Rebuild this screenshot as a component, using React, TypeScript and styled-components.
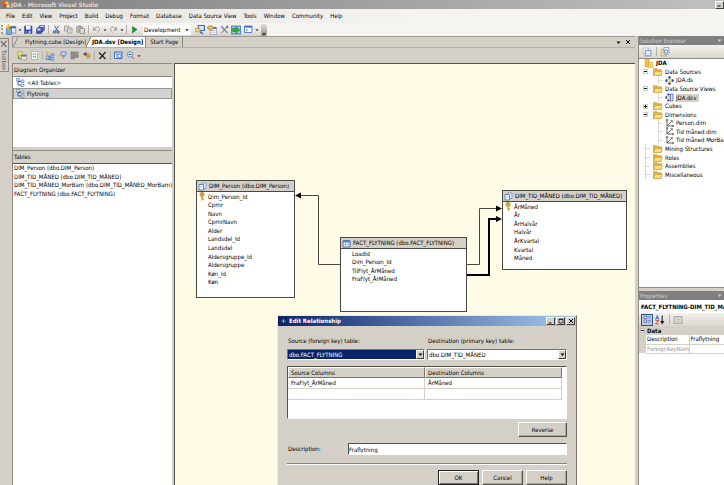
import React from "react";
import styled, { createGlobalStyle, css } from "styled-components";

const face = "#d4d0c8";
const uiFont = '"DejaVu Sans Condensed", "DejaVu Sans", sans-serif';

const GlobalStyle = createGlobalStyle`
  * { box-sizing: border-box; }
  html, body { margin: 0; height: 100%; overflow: hidden; }
  body, button, input, select, table { font-family: ${uiFont}; font-size: 6px; line-height: 8px; color: #000; }
  button, input, select { margin: 0; padding: 0; border: 0; border-radius: 0; background: none; }
  ul { list-style: none; margin: 0; padding: 0; }
`;

const Window = styled.div`
  height: 100vh;
  display: flex;
  flex-direction: column;
  background: ${face};
  white-space: nowrap;
  position: relative;
  overflow: hidden;
`;

const TitleBar = styled.header`
  height: 9px;
  flex: none;
  display: flex;
  align-items: center;
  gap: 1px;
  padding: 0 0 0 1px;
  background: linear-gradient(90deg, #808080, #c0c0c0);
  color: #dedad3;
  font-weight: bold;
`;

const Spacer = styled.div`
  flex: 1;
`;

const CaptionButton = styled.button`
  width: 9px;
  height: 8px;
  flex: none;
  display: grid;
  place-items: center;
  background: ${face};
  border: 1px solid;
  border-color: #fff #404040 #404040 #fff;
`;

const MenuBar = styled.nav`
  height: 14px;
  flex: none;
  display: flex;
  align-items: center;
  gap: 7px;
  padding-left: 6px;
  background: linear-gradient(90deg, #e6e3dd, #f5f4f1 60%);
`;

const MenuItem = styled.button``;

const ToolRow = styled.div`
  height: 13px;
  flex: none;
  display: flex;
  background: #f5f4f1;
`;

const Toolbar = styled.div`
  display: flex;
  align-items: center;
  padding-left: 1px;
  border-radius: 2px;
  background: linear-gradient(#f8f7f5, #e9e6e0 60%, #d6d2ca);
`;

const Grip = styled.div`
  width: 4px;
  height: 9px;
  border-left: 2px dotted #a5a198;
`;

const ToolButton = styled.button<{ $pressed?: boolean }>`
  width: 12px;
  height: 12px;
  flex: none;
  display: grid;
  place-items: center;
  ${(p) => p.$pressed && css`
    background: #c3cbdc;
    border: 1px solid #31517f;
  `}
`;

const DropArrow = styled.button`
  width: 5px;
  height: 10px;
  flex: none;
  display: grid;
  place-items: center;
`;

const Separator = styled.div`
  width: 4px;
  height: 9px;
  flex: none;
  display: flex;
  justify-content: center;
  &::before { content: ""; width: 1px; background: #b5b1a9; }
`;

const Overflow = styled.button`
  width: 6px;
  height: 12px;
  margin-left: 2px;
  display: flex;
  align-items: flex-end;
  justify-content: center;
  background: linear-gradient(#e4e1db, #8d8a83);
  border-radius: 0 2px 2px 0;
`;

const SelectFrame = styled.div<{ $sunken?: boolean; $width?: number }>`
  position: relative;
  display: flex;
  align-items: center;
  background: #fff;
  height: 10px;
  ${(p) => p.$width && css`width: ${p.$width}px; margin: 0 3px;`}
  ${(p) => p.$sunken && css`
    height: 11px;
    border: 1px solid;
    border-color: #77746d #fff #fff #77746d;
  `}
`;

const Select = styled.select<{ $focused?: boolean }>`
  appearance: none;
  width: 100%;
  height: 9px;
  padding-left: 1px;
  outline: none;
  ${(p) => p.$focused && css`
    background: #0a246a;
    color: #fff;
  `}
`;

const SelectArrow = styled.span<{ $raised?: boolean }>`
  position: absolute;
  right: 0;
  top: 0;
  bottom: 0;
  width: 8px;
  display: grid;
  place-items: center;
  pointer-events: none;
  ${(p) => p.$raised && css`
    background: ${face};
    border: 1px solid;
    border-color: #fff #404040 #404040 #fff;
  `}
`;

const Workspace = styled.div`
  flex: 1;
  min-height: 0;
  display: grid;
  grid-template-columns: 12px minmax(0, 1fr) 86px;
`;

const ToolboxStrip = styled.aside`
  padding-top: 2px;
`;

const ToolboxTab = styled.button`
  display: flex;
  align-items: center;
  gap: 2px;
  writing-mode: vertical-rl;
  width: 9px;
  height: 34px;
  padding-top: 1px;
  border: 1px solid #8d8a83;
  border-left: 0;
  color: #55524c;
`;

const DocumentArea = styled.main`
  display: flex;
  flex-direction: column;
  min-width: 0;
  min-height: 0;
  margin-right: 3px;
`;

const TabStrip = styled.div`
  height: 11px;
  flex: none;
  display: flex;
  align-items: flex-end;
  padding-right: 3px;
  border-top: 1px solid #9d9a93;
  border-left: 1px solid #9d9a93;
`;

const Tab = styled.button<{ $active?: boolean }>`
  height: 10px;
  padding: 0 2px 0 6px;
  border-right: 1px solid #8d8a83;
  background: linear-gradient(116deg, transparent 4px, #8d8a83 4px, #8d8a83 5px, ${(p) => (p.$active ? "#fff" : face)} 5px);
  font-weight: ${(p) => (p.$active ? "bold" : "normal")};
  &:first-child { padding-left: 12px; padding-right: 0; border-right: 0; }
  &:nth-child(3) { padding-left: 4px; padding-right: 4px; background: none; }
`;

const StripButton = styled.button`
  width: 9px;
  height: 10px;
  display: grid;
  place-items: center;
`;

const DesignerBar = styled.div`
  height: 16px;
  flex: none;
  display: flex;
  align-items: center;
  padding-left: 4px;
  border-top: 1px solid #b5b1a9;
`;

const Designer = styled.div`
  flex: 1;
  min-height: 0;
  display: grid;
  grid-template-columns: 160px minmax(0, 1fr);
  gap: 2px;
`;

const Organizer = styled.section`
  display: flex;
  flex-direction: column;
  border-left: 1px solid #8d8a83;
`;

const PaneTitle = styled.h2`
  height: 13px;
  flex: none;
  display: flex;
  align-items: center;
  margin: 0;
  padding-left: 1px;
  border-top: 1px solid #8d8a83;
  font: inherit;
`;

const DiagramList = styled.ul`
  height: 71px;
  flex: none;
  background: #fff;
  border-top: 1px solid #8d8a83;
  margin-bottom: 3px;
`;

const DiagramItem = styled.li<{ $selected?: boolean }>`
  height: 11px;
  display: flex;
  align-items: center;
  gap: 2px;
  padding-left: 2px;
  border: 1px solid ${(p) => (p.$selected ? "#99968f" : "transparent")};
  background: ${(p) => (p.$selected ? "#d2d2d2" : "none")};
`;

const TableList = styled.div`
  flex: 1;
  background: #fff;
  border-top: 1px solid #55524c;
  padding: 0 1px;
`;

const Rows = styled.ul<{ $height: number }>`
  height: ${(p) => p.$height}px;
  display: grid;
  grid-auto-rows: minmax(0, 1fr);
  align-items: center;
`;

const Canvas = styled.section`
  position: relative;
  overflow: hidden;
  background: #fffbe6;
  border-top: 1px solid #55524c;
  border-left: 1px solid #55524c;
`;

const Links = styled.svg`
  position: absolute;
  inset: 0;
  width: 100%;
  height: 100%;
`;

const Entity = styled.article<{ $x: number; $y: number; $w: number; $h: number }>`
  position: absolute;
  left: ${(p) => p.$x}px;
  top: ${(p) => p.$y}px;
  width: ${(p) => p.$w}px;
  height: ${(p) => p.$h}px;
  background: #fff;
  border: 1px solid #4a4843;
`;

const EntityTitle = styled.h3`
  height: 11px;
  display: flex;
  align-items: center;
  gap: 2px;
  margin: 0;
  padding-left: 1px;
  font: inherit;
  background: ${face};
  border-bottom: 1px solid #4a4843;
`;

const Field = styled.li`
  display: grid;
  grid-template-columns: 11px 1fr;
  align-items: center;
  height: 8px;
`;

const KeySlot = styled.span`
  display: flex;
  height: 9px;
  padding-left: 1px;
`;

const SidePanels = styled.aside`
  display: flex;
  flex-direction: column;
  min-height: 0;
  overflow: hidden;
  border-left: 1px solid #8d8a83;
`;

const PanelTitle = styled.h2`
  height: 9px;
  flex: none;
  display: flex;
  align-items: center;
  justify-content: space-between;
  margin: 0;
  padding: 0 2px 0 1px;
  font: inherit;
  color: ${face};
  background: #808080;
`;

const PanelBar = styled.div`
  height: 13px;
  flex: none;
  display: flex;
  align-items: center;
  gap: 1px;
  padding-left: 2px;
  background: linear-gradient(#f3f1ee, #dad6cf);
`;

const TreePane = styled.div`
  height: 230px;
  flex: none;
  background: #fff;
  border-top: 1px solid #8d8a83;
  border-bottom: 1px solid #8d8a83;
  margin-bottom: 3px;
  overflow: hidden;
`;

const TreeRow = styled.li<{ $depth: number }>`
  height: 8px;
  display: flex;
  align-items: center;
  gap: 2px;
  padding-left: ${(p) => [5, 4, 17][p.$depth]}px;
`;

const Twig = styled.span<{ $wide?: boolean }>`
  width: ${(p) => (p.$wide ? 8 : 7)}px;
  height: 9px;
  display: flex;
  align-items: center;
`;

const TreeLabel = styled.span<{ $bold?: boolean; $selected?: boolean }>`
  font-weight: ${(p) => (p.$bold ? "bold" : "normal")};
  background: ${(p) => (p.$selected ? face : "none")};
  padding-right: ${(p) => (p.$selected ? 3 : 0)}px;
`;

const ObjectName = styled.div`
  height: 13px;
  flex: none;
  display: flex;
  align-items: center;
  padding-left: 2px;
  background: #fff;
  font-weight: bold;
  overflow: hidden;
`;

const PropertyTable = styled.table`
  border-collapse: collapse;
  table-layout: fixed;
  width: 100%;
  th, td { height: 9px; padding: 0 1px; text-align: left; font-weight: normal; overflow: hidden; border-bottom: 1px solid ${face}; }
  td { border-left: 1px solid ${face}; }
  col:first-child { width: 7px; }
  col:nth-child(2) { width: 43px; }
`;

const GroupRow = styled.tr`
  && > * { background: ${face}; font-weight: bold; border: 0; }
`;

const MutedRow = styled.tr`
  th { color: #99968f; }
`;

const GutterCell = styled.td`
  && { background: ${face}; border: 0; }
`;

const PropertyArea = styled.div`
  flex: 1;
  background: #fff;
`;

const Dialog = styled.div`
  position: absolute;
  left: 277px;
  top: 315px;
  width: 300px;
  height: 182px;
  background: ${face};
  border: 1px solid;
  border-color: #ece9e4 #77746d #77746d #ece9e4;
`;

const DialogTitle = styled.header`
  height: 10px;
  display: flex;
  align-items: center;
  padding: 0 1px 0 3px;
  gap: 3px;
  background: linear-gradient(90deg, #0a246a, #a6caf0);
  color: #fff;
  font-weight: bold;
`;

const CaptionGroup = styled.div`
  display: flex;
  gap: 1px;
`;

const DialogBody = styled.form`
  padding: 11px 9px 0;
  display: flex;
  flex-direction: column;
`;

const TwoColumns = styled.div`
  display: grid;
  grid-template-columns: 138px 1fr;
  gap: 2px;
`;

const Labelled = styled.div`
  display: grid;
  grid-template-rows: 9px 11px;
  gap: 3px;
  label { padding-left: 1px; }
`;

const GridFrame = styled.div`
  height: 53px;
  margin-top: 6px;
  background: #fff;
  border: 1px solid;
  border-color: #55524c #fff #fff #55524c;
  padding-right: 4px;
`;

const ColumnTable = styled.table`
  width: 100%;
  border-collapse: separate;
  border-spacing: 0;
  table-layout: fixed;
  th, td { height: 11px; padding: 0 3px; text-align: left; font-weight: normal; }
  th { background: ${face}; border: 1px solid; border-color: #fff #77746d #77746d #fff; padding: 0 2px; }
  td { border-right: 1px solid ${face}; border-bottom: 1px solid ${face}; }
`;

const ButtonRow = styled.div`
  display: flex;
  justify-content: flex-end;
  gap: 3px;
`;

const PushButton = styled.button<{ $primary?: boolean; $width: number }>`
  width: ${(p) => p.$width}px;
  height: 15px;
  background: ${face};
  border: 1px solid;
  border-color: #fff #55524c #55524c #fff;
  box-shadow: inset -1px -1px 0 #aaa69d;
  ${(p) => p.$primary && css`
    border-color: #222;
    box-shadow: inset 1px 1px 0 #fff, inset -1px -1px 0 #77746d;
  `}
`;

const DescriptionRow = styled.div`
  display: grid;
  grid-template-columns: 61px 1fr;
  align-items: center;
  margin: 6px 0 8px;
  label { padding-left: 1px; }
`;

const TextInput = styled.input`
  height: 12px;
  padding: 0;
  background: #fff;
  border: 1px solid;
  border-color: #55524c #fff #fff #55524c;
`;

const Rule = styled.hr`
  width: 100%;
  margin: 0 0 5px;
  border: 0;
  border-top: 1px solid #88857d;
  border-bottom: 1px solid #fff;
`;

const ButtonStack = styled.div`
  padding-top: 3px;
`;

type IconProps = { size?: number; children: React.ReactNode };
const Icon = ({ size = 9, children }: IconProps) => (
  <svg width={size} height={size} viewBox="0 0 18 18" fill="none" aria-hidden="true">{children}</svg>
);

const Triangle = ({ color = "#111", size = 5 }: { color?: string; size?: number }) => (
  <svg width={size} height={size} viewBox="0 0 10 10" aria-hidden="true"><path d="M1 3h8L5 8z" fill={color} /></svg>
);

const AppIcon = () => (
  <Icon><path d="M2 3h7v6H2z" fill="#f05a28" /><path d="M9 3h6v5H9z" fill="#f7c93c" /><path d="M5 9h6v6H5z" fill="#d33" /><path d="M11 9h6v6h-6z" fill="#ffe08a" /></Icon>
);
const NewIcon = () => (
  <Icon size={11}><path d="M4 4h12v11H4z" fill="#dce9fa" stroke="#3e6db5" /><path d="M4 4h12v3H4z" fill="#3e6db5" /><path d="M1 7h8v10H1z" fill="#7fa8de" stroke="#3464a8" /><path d="M4 0v8M0 4h8" stroke="#f0b93a" strokeWidth="2" /></Icon>
);
const SaveIcon = () => (
  <Icon><path d="M1 2h15v15H1z" fill="#3d55b5" stroke="#2a3d90" /><path d="M4 2h9v7H4z" fill="#f2f4fb" /><path d="M5 12h8v5H5z" fill="#c3cbe8" /><path d="M6 12h3v4H6z" fill="#26377f" /></Icon>
);
const SaveAllIcon = () => (
  <Icon><path d="M7 1h10v10H7z" fill="#6c80cf" stroke="#2a3d90" /><path d="M4 4h10v10H4z" fill="#5367c0" stroke="#2a3d90" /><path d="M1 7h10v10H1z" fill="#3d55b5" stroke="#2a3d90" /><path d="M3 7h6v4H3zM9 2h6v2H9z" fill="#e5e9f8" /></Icon>
);
const CutIcon = () => (
  <Icon><path d="M5 1l6 11M13 1L7 12" stroke="#4b6ea8" strokeWidth="2" /><circle cx="5" cy="14" r="2.5" stroke="#2c4f96" strokeWidth="2" /><circle cx="12" cy="14" r="2.5" stroke="#2c4f96" strokeWidth="2" /></Icon>
);
const CopyIcon = () => (
  <Icon><path d="M1 2h9v10H1z" fill="#dcdad5" stroke="#a5a29b" strokeWidth="2" /><path d="M7 6h9v10H7z" fill="#e9e7e3" stroke="#a5a29b" strokeWidth="2" /><path d="M9 9h5M9 12h5" stroke="#a5a29b" /></Icon>
);
const PasteIcon = () => (
  <Icon><path d="M1 3h12v12H1z" fill="#b4b1aa" stroke="#98958e" /><path d="M5 1h5v3H5z" fill="#8c8982" /><path d="M8 7h9v10H8z" fill="#e3e0da" stroke="#98958e" strokeWidth="2" /></Icon>
);
const UndoIcon = ({ redo }: { redo?: boolean }) => (
  <Icon><g transform={redo ? "matrix(-1 0 0 1 18 0)" : undefined}><path d="M4 8c4-6 11-5 11 0 0 3-2 5-4 7" stroke="#a29f98" strokeWidth="2" /><path d="M2 3v8h8z" fill="#a29f98" /></g></Icon>
);
const PlayIcon = () => (
  <Icon><path d="M5 3l9 6-9 7z" fill="#1f9a35" stroke="#0c6a1e" /></Icon>
);
const ExplorerIcon = () => (
  <Icon size={10}><path d="M6 1h11v9H6z" fill="#dce8f8" stroke="#3e6db5" strokeWidth="2" /><path d="M1 6h8v6H1z" fill="#f4cf62" stroke="#b38a27" /><path d="M9 12l5 4" stroke="#3e6db5" strokeWidth="3" /></Icon>
);
const PropertiesIcon = () => (
  <Icon size={10}><path d="M6 5h11v12H6z" fill="#fff" stroke="#6a7fae" /><path d="M6 4h11v3H6z" fill="#3e6db5" /><path d="M8 10h7M8 13h7" stroke="#888" /><path d="M1 3l6-2 5 3-4 6-6-2z" fill="#edbb55" stroke="#96712a" /></Icon>
);
const ToolsIcon = () => (
  <Icon><path d="M3 3l12 13" stroke="#7f8fae" strokeWidth="3" /><path d="M15 2L3 16" stroke="#c64b36" strokeWidth="2" /><path d="M1 3l4-2 3 4-3 3z" fill="#93a3c5" /><path d="M12 2l4-1 1 4-3 2z" fill="#667aa4" /></Icon>
);
const DeployIcon = () => (
  <Icon size={10}><path d="M1 2h16v14H1z" fill="#b9d0f2" stroke="#5f82c0" strokeWidth="2" /><path d="M3 6h6V3l7 6-7 6v-3H3z" fill="#23b336" stroke="#137a22" /></Icon>
);
const CommandIcon = () => (
  <Icon><path d="M1 2h15v13H1z" fill="#f3f7fd" stroke="#5f82c0" strokeWidth="2" /><path d="M1 2h15v3H1z" fill="#4068b0" /><path d="M4 8l3 2-3 2" stroke="#333" /></Icon>
);
const AddTableIcon = () => (
  <Icon size={10}><path d="M1 1h8v7H1z" fill="#f7d66c" stroke="#ba9127" /><path d="M8 7h9v9H8z" fill="#f7e9a8" stroke="#7d87a0" /><path d="M8 7h9v3H8z" fill="#5273ac" /><path d="M3 9v5h4" stroke="#4a9445" strokeWidth="2" /></Icon>
);
const RefreshIcon = () => (
  <Icon><path d="M3 1h12v16H3z" fill="#fff" stroke="#7c8895" /><path d="M6 8c1-4 6-3 6 0M12 10c-1 4-6 3-6 0" stroke="#38974a" strokeWidth="2" /></Icon>
);
const DiagramIcon = () => (
  <Icon><path d="M4 3v11h7M4 7h7" stroke="#3c62ae" strokeWidth="2" /><path d="M1 1h6v5H1zM10 4h6v5h-6zM10 12h6v5h-6z" fill="#d5e3f8" stroke="#3c62ae" /></Icon>
);
const NewDiagramIcon = () => (
  <Icon size={10}><path d="M5 7v8h7M7 9l6 4" stroke="#4776c4" strokeWidth="2" /><path d="M2 9h5v6H2zM11 12h5v5h-5zM11 5h5v4h-5z" fill="#a9c8f1" stroke="#3f6bb5" /><path d="M4 0v8M0 4h8" stroke="#edb12d" strokeWidth="2" /></Icon>
);
const RelationIcon = () => (
  <Icon><path d="M6 2h10v6H6z" fill="#d9e7fa" stroke="#5b84c4" strokeWidth="2" /><path d="M1 7h6v4H1z" fill="#f0b93a" /><path d="M7 10l6 1-4 5" stroke="#6a92ce" strokeWidth="2" /></Icon>
);
const GrayBlockIcon = () => (
  <Icon><path d="M1 1h16v13H9v3H1z" fill="#8f8c85" /></Icon>
);
const FindIcon = () => (
  <Icon><path d="M2 6l5-4 4 4-5 4z" fill="#555b68" /><path d="M8 9l5-4 4 5-5 5z" fill="#e2a928" stroke="#936c17" /></Icon>
);
const DeleteIcon = () => (
  <Icon><path d="M2 3l13 13M15 2L3 16" stroke="#222" strokeWidth="2.4" /></Icon>
);
const ExploreIcon = () => (
  <Icon><path d="M1 2h15v13H1z" fill="#e1ebfa" stroke="#4170bd" strokeWidth="2" /><path d="M1 6h15M6 2v13" stroke="#4170bd" /><circle cx="11" cy="10" r="3.5" fill="#fff" stroke="#315ba3" strokeWidth="1.5" /></Icon>
);
const ZoomIcon = () => (
  <Icon><circle cx="8" cy="7" r="5.5" fill="#dbe9fb" stroke="#6d8dc0" strokeWidth="2" /><path d="M5 7h6" stroke="#315ba3" strokeWidth="2" /><path d="M12 12l4 4" stroke="#b98f4a" strokeWidth="3" /></Icon>
);
const ToolboxIcon = () => (
  <Icon size={8}><path d="M2 3l13 13" stroke="#54709f" strokeWidth="3" /><path d="M15 2L3 15" stroke="#c4463c" strokeWidth="2.4" /></Icon>
);
const TableIcon = () => (
  <Icon><path d="M2 3h14v13H2z" fill="#f1f6fd" stroke="#4b72b8" strokeWidth="2" /><path d="M2 3h14v4H2z" fill="#5a86d3" /><path d="M2 11h14M7 6v10M12 6v10" stroke="#7b9bd2" /></Icon>
);
const LinkedTableIcon = () => (
  <Icon><path d="M7 2h9v11H7z" fill="#e1edfc" stroke="#7fa3da" strokeWidth="2" /><path d="M2 5h9v11H2z" fill="#f5f9ff" stroke="#5d87c9" strokeWidth="2" /><path d="M2 9h9M6 9v7" stroke="#a9c0e6" /></Icon>
);
const KeyIcon = () => (
  <Icon><circle cx="8" cy="5" r="4.5" fill="#eab33a" stroke="#a8771c" /><path d="M7 9h3v8H7zM10 12h2v3h-2z" fill="#d99d28" /><circle cx="8" cy="4" r="1.3" fill="#7d5a14" /></Icon>
);
const FolderIcon = () => (
  <Icon size={10}><path d="M1 3h6l2 2h6v10H1z" fill="#e9b23a" stroke="#b98a2c" /><path d="M1 15l3-7h13l-3 7z" fill="#fde08a" stroke="#c9972f" /></Icon>
);
const ProjectIcon = () => (
  <Icon size={10}><path d="M2 2h7v14H2z" fill="#f4c536" stroke="#c4931c" /><path d="M8 8h8v9H8z" fill="#fbdf7c" stroke="#c4931c" /><path d="M12 11v4" stroke="#b88a1e" /></Icon>
);
const SourceIcon = () => (
  <Icon><path d="M9 4l5 5-5 5-5-5z" fill="#ffe27a" stroke="#a6892c" /><path d="M9 0l3 4H6zM9 18l3-4H6zM0 9l4-3v6zM18 9l-4-3v6z" fill="#2e42c0" stroke="#2e42c0" /></Icon>
);
const ViewIcon = () => (
  <Icon><path d="M7 5l4 4-4 4-4-4z" fill="#ffe27a" stroke="#a6892c" /><path d="M7 1l3 3H4zM7 17l3-3H4zM0 9l3-3v6z" fill="#2e42c0" stroke="#2e42c0" /><path d="M11 2h5v14h-5z" fill="#dae4f8" stroke="#4458b8" strokeWidth="1.5" /></Icon>
);
const DimensionIcon = () => (
  <Icon><path d="M4 1v13h13M4 14L14 4" stroke="#333" strokeWidth="1.5" /><path d="M2 4l2-4 2 4M14 12l4 2-4 2M11 3h4v4" stroke="#333" /></Icon>
);
const StackIcon = () => (
  <Icon size={10}><path d="M2 2h10v10H2z" fill="#fff" stroke="#8e9bb0" /><path d="M6 6h10v10H6z" fill="#dfe8f5" stroke="#8fa3c6" strokeWidth="2" /></Icon>
);
const PagesIcon = () => (
  <Icon size={10}><path d="M2 4h9v12H2z" fill="#fbe39a" stroke="#b08a32" /><path d="M7 1h9v12H7z" fill="#f6f9ff" stroke="#5271a8" /><circle cx="11" cy="8" r="3" stroke="#426bbb" strokeWidth="1.5" /></Icon>
);
const CategoryIcon = () => (
  <Icon><path d="M2 2h5v5H2zM2 10h5v5H2z" fill="#eef3fb" stroke="#4667a6" strokeWidth="1.5" /><path d="M9 3h7M9 6h7M9 11h7M9 14h7" stroke="#4667a6" /></Icon>
);
const SortIcon = () => (
  <Icon size={10}><path d="M1 8l3-7 3 7M2 6h4" stroke="#2c51b0" strokeWidth="1.5" /><path d="M1 10h6l-6 6h6" stroke="#b23c2c" strokeWidth="1.5" /><path d="M13 1v12" stroke="#222" strokeWidth="2" /><path d="M9 11h8l-4 6z" fill="#222" /></Icon>
);
const PageIcon = () => (
  <Icon size={10}><path d="M2 3h14v12H2z" fill="#e1ded8" stroke="#b0ada6" strokeWidth="2" /><path d="M5 8h8M5 11h8" stroke="#b0ada6" /></Icon>
);
const ExpandIcon = ({ plus }: { plus?: boolean }) => (
  <svg width="5" height="5" viewBox="0 0 10 10" aria-hidden="true"><path d="M1 1h8v8H1z" fill="#fff" stroke="#99968f" /><path d={plus ? "M2 5h6M5 2v6" : "M2 5h6"} stroke="#111" strokeWidth="2" /></svg>
);
const BranchIcon = () => (
  <svg width="7" height="9" viewBox="0 0 14 18" aria-hidden="true"><path d="M5 0v18M5 9h9" stroke="#bab7af" fill="none" /></svg>
);
const CloseGlyph = ({ color = "#111" }: { color?: string }) => (
  <svg width="6" height="6" viewBox="0 0 12 12" aria-hidden="true"><path d="M2 2l8 8M10 2l-8 8" stroke={color} strokeWidth="2" /></svg>
);
const MinGlyph = () => (
  <svg width="5" height="5" viewBox="0 0 10 10" aria-hidden="true"><path d="M1 8h6" stroke="#111" strokeWidth="2" /></svg>
);
const MaxGlyph = () => (
  <svg width="6" height="6" viewBox="0 0 12 12" aria-hidden="true"><path d="M2 2h8v8H2zM2 3h8" stroke="#111" strokeWidth="1.5" fill="none" /></svg>
);
const FormGlyph = () => (
  <svg width="5" height="6" viewBox="0 0 10 12" aria-hidden="true"><path d="M1 6h8M5 2v8" stroke="#8fa878" strokeWidth="2" /></svg>
);

const menus = ["File", "Edit", "View", "Project", "Build", "Debug", "Format", "Database", "Data Source View", "Tools", "Window", "Community", "Help"];
const tables = ["DIM_Person (dbo.DIM_Person)", "DIM_TID_MÅNED (dbo.DIM_TID_MÅNED)", "DIM_TID_MÅNED_MorBarn (dbo.DIM_TID_MÅNED_MorBarn)", "FACT_FLYTNING (dbo.FACT_FLYTNING)"];

const entities = [
  { title: tables[0], icon: <LinkedTableIcon />, x: 21, y: 116, w: 99, h: 118, listHeight: 94, keyed: true, fields: ["Dim_Person_Id", "Cprnr", "Navn", "CprnrNavn", "Alder", "Landsdel_Id", "Landsdel", "Aldersgruppe_Id", "Aldersgruppe", "Køn_Id", "Køn"] },
  { title: tables[3], icon: <TableIcon />, x: 165, y: 173, w: 127, h: 75, listHeight: 34, keyed: false, fields: ["LoadId", "Dim_Person_Id", "TilFlyt_ÅrMåned", "FraFlyt_ÅrMåned"] },
  { title: tables[1], icon: <LinkedTableIcon />, x: 327, y: 126, w: 125, h: 80, listHeight: 60, keyed: true, fields: ["ÅrMåned", "År", "ÅrHalvår", "Halvår", "ÅrKvartal", "Kvartal", "Måned"] },
];

type Node = { label: string; depth: number; icon: React.ReactNode; toggle?: "plus" | "minus"; bold?: boolean; selected?: boolean };
const tree: Node[] = [
  { label: "JDA", depth: 0, icon: <ProjectIcon />, bold: true },
  { label: "Data Sources", depth: 1, icon: <FolderIcon />, toggle: "minus" },
  { label: "JDA.ds", depth: 2, icon: <SourceIcon /> },
  { label: "Data Source Views", depth: 1, icon: <FolderIcon />, toggle: "minus" },
  { label: "JDA.dsv", depth: 2, icon: <ViewIcon />, selected: true },
  { label: "Cubes", depth: 1, icon: <FolderIcon />, toggle: "plus" },
  { label: "Dimensions", depth: 1, icon: <FolderIcon />, toggle: "minus" },
  { label: "Person.dim", depth: 2, icon: <DimensionIcon /> },
  { label: "Tid måned.dim", depth: 2, icon: <DimensionIcon /> },
  { label: "Tid måned MorBarn.dim", depth: 2, icon: <DimensionIcon /> },
  { label: "Mining Structures", depth: 1, icon: <FolderIcon /> },
  { label: "Roles", depth: 1, icon: <FolderIcon /> },
  { label: "Assemblies", depth: 1, icon: <FolderIcon /> },
  { label: "Miscellaneous", depth: 1, icon: <FolderIcon /> },
];

const Tool = ({ label, pressed, children }: { label: string; pressed?: boolean; children: React.ReactNode }) => (
  <ToolButton type="button" aria-label={label} $pressed={pressed}>{children}</ToolButton>
);
const Drop = ({ label }: { label: string }) => (
  <DropArrow type="button" aria-label={label}><Triangle size={4} color="#444" /></DropArrow>
);

function RelationshipDialog() {
  return (
    <Dialog role="dialog" aria-label="Edit Relationship">
      <DialogTitle>
        <FormGlyph />
        <span>Edit Relationship</span>
        <Spacer />
        <CaptionGroup>
          <CaptionButton aria-label="Minimize"><MinGlyph /></CaptionButton>
          <CaptionButton aria-label="Maximize"><MaxGlyph /></CaptionButton>
          <CaptionButton aria-label="Close"><CloseGlyph /></CaptionButton>
        </CaptionGroup>
      </DialogTitle>
      <DialogBody onSubmit={(e) => e.preventDefault()}>
        <TwoColumns>
          <Labelled>
            <label htmlFor="source">Source (foreign key) table:</label>
            <SelectFrame $sunken>
              <Select id="source" $focused><option>dbo.FACT_FLYTNING</option></Select>
              <SelectArrow $raised><Triangle /></SelectArrow>
            </SelectFrame>
          </Labelled>
          <Labelled>
            <label htmlFor="destination">Destination (primary key) table:</label>
            <SelectFrame $sunken>
              <Select id="destination"><option>dbo.DIM_TID_MÅNED</option></Select>
              <SelectArrow $raised><Triangle /></SelectArrow>
            </SelectFrame>
          </Labelled>
        </TwoColumns>
        <GridFrame>
          <ColumnTable>
            <thead><tr><th>Source Columns</th><th>Destination Columns</th></tr></thead>
            <tbody>
              <tr><td>FraFlyt_ÅrMåned</td><td>ÅrMåned</td></tr>
              <tr><td /><td /></tr>
            </tbody>
          </ColumnTable>
        </GridFrame>
        <ButtonStack>
          <ButtonRow><PushButton type="button" $width={49}>Reverse</PushButton></ButtonRow>
        </ButtonStack>
        <DescriptionRow>
          <label htmlFor="description">Description:</label>
          <TextInput id="description" defaultValue="Fraflytning" />
        </DescriptionRow>
        <Rule />
        <ButtonRow>
          <PushButton type="submit" $primary $width={41}>OK</PushButton>
          <PushButton type="button" $width={41}>Cancel</PushButton>
          <PushButton type="button" $width={41}>Help</PushButton>
        </ButtonRow>
      </DialogBody>
    </Dialog>
  );
}

function Diagram() {
  return (
    <Canvas aria-label="Diagram">
      <Links aria-hidden="true">
        <path d="M165 200.500H143.500V131.500H124M292 200.500H304.500V144.500H322" stroke="#4a4843" fill="none" />
        <path d="M292 211H314V155H322" stroke="#000" strokeWidth="2" fill="none" />
        <path d="M120 131.500l6-3v6zM327 144.500l-6-3v6zM327 155l-6-3v6z" fill="#000" />
      </Links>
      {entities.map((e) => (
        <Entity key={e.title} $x={e.x} $y={e.y} $w={e.w} $h={e.h}>
          <EntityTitle>{e.icon}{e.title}</EntityTitle>
          <Rows $height={e.listHeight}>
            {e.fields.map((f, i) => (
              <Field key={f}><KeySlot>{e.keyed && i === 0 && <KeyIcon />}</KeySlot>{f}</Field>
            ))}
          </Rows>
        </Entity>
      ))}
    </Canvas>
  );
}

export default function App() {
  return (
    <Window>
      <GlobalStyle />
      <TitleBar>
        <AppIcon />
        <span>JDA - Microsoft Visual Studio</span>
        <Spacer />
        <CaptionButton aria-label="Minimize window"><MinGlyph /></CaptionButton>
      </TitleBar>
      <MenuBar>{menus.map((m) => <MenuItem key={m} type="button">{m}</MenuItem>)}</MenuBar>
      <ToolRow>
        <Toolbar>
          <Grip />
          <Tool label="New project"><NewIcon /></Tool>
          <Drop label="New project options" />
          <Tool label="Save"><SaveIcon /></Tool>
          <Tool label="Save all"><SaveAllIcon /></Tool>
          <Separator />
          <Tool label="Cut"><CutIcon /></Tool>
          <Tool label="Copy"><CopyIcon /></Tool>
          <Tool label="Paste"><PasteIcon /></Tool>
          <Separator />
          <Tool label="Undo"><UndoIcon /></Tool>
          <Drop label="Undo list" />
          <Tool label="Redo"><UndoIcon redo /></Tool>
          <Drop label="Redo list" />
          <Separator />
          <Tool label="Start"><PlayIcon /></Tool>
          <SelectFrame $width={48}>
            <Select aria-label="Configuration"><option>Development</option></Select>
            <SelectArrow><Triangle size={4} /></SelectArrow>
          </SelectFrame>
          <Tool label="Solution Explorer"><ExplorerIcon /></Tool>
          <Tool label="Properties window"><PropertiesIcon /></Tool>
          <Tool label="Toolbox window"><ToolsIcon /></Tool>
          <Tool label="Deploy"><DeployIcon /></Tool>
          <Tool label="Command window"><CommandIcon /></Tool>
          <Drop label="Other windows" />
          <Overflow type="button" aria-label="Toolbar options"><Triangle size={4} /></Overflow>
        </Toolbar>
      </ToolRow>
      <Workspace>
        <ToolboxStrip>
          <ToolboxTab type="button"><ToolboxIcon />Toolbox</ToolboxTab>
        </ToolboxStrip>
        <DocumentArea>
          <TabStrip>
            <Tab type="button">Flytning.cube [Design]</Tab>
            <Tab type="button" $active>JDA.dsv [Design]</Tab>
            <Tab type="button">Start Page</Tab>
            <Spacer />
            <StripButton type="button" aria-label="Active files"><Triangle /></StripButton>
            <StripButton type="button" aria-label="Close document"><CloseGlyph /></StripButton>
          </TabStrip>
          <DesignerBar>
            <Tool label="Add objects"><AddTableIcon /></Tool>
            <Tool label="Refresh"><RefreshIcon /></Tool>
            <Separator />
            <Tool label="New diagram"><NewDiagramIcon /></Tool>
            <Tool label="New relationship"><RelationIcon /></Tool>
            <Tool label="Replace table"><GrayBlockIcon /></Tool>
            <Tool label="Find table"><FindIcon /></Tool>
            <Separator />
            <Tool label="Delete"><DeleteIcon /></Tool>
            <Separator />
            <Tool label="Explore data"><ExploreIcon /></Tool>
            <Tool label="Zoom"><ZoomIcon /></Tool>
            <Drop label="Zoom levels" />
          </DesignerBar>
          <Designer>
            <Organizer>
              <PaneTitle>Diagram Organizer</PaneTitle>
              <DiagramList>
                <DiagramItem><DiagramIcon />&lt;All Tables&gt;</DiagramItem>
                <DiagramItem $selected><DiagramIcon />Flytning</DiagramItem>
              </DiagramList>
              <PaneTitle>Tables</PaneTitle>
              <TableList>
                <Rows $height={34}>{tables.map((t) => <li key={t}>{t}</li>)}</Rows>
              </TableList>
            </Organizer>
            <Diagram />
          </Designer>
        </DocumentArea>
        <SidePanels>
          <PanelTitle>Solution Explorer<Triangle color={face} /></PanelTitle>
          <PanelBar>
            <Tool label="Properties"><StackIcon /></Tool>
            <Separator />
            <Tool label="Show all files"><PagesIcon /></Tool>
          </PanelBar>
          <TreePane>
            <Rows $height={120}>
              {tree.map((n) => (
                <TreeRow key={n.label} $depth={n.depth}>
                  {n.depth > 0 && (
                    <Twig $wide={n.depth === 1}>{n.toggle ? <ExpandIcon plus={n.toggle === "plus"} /> : <BranchIcon />}</Twig>
                  )}
                  {n.icon}
                  <TreeLabel $bold={n.bold} $selected={n.selected}>{n.label}</TreeLabel>
                </TreeRow>
              ))}
            </Rows>
          </TreePane>
          <PanelTitle>Properties<Triangle color={face} /></PanelTitle>
          <ObjectName>FACT_FLYTNING-DIM_TID_MÅNED</ObjectName>
          <PanelBar>
            <Tool label="Categorized" pressed><CategoryIcon /></Tool>
            <Tool label="Alphabetical"><SortIcon /></Tool>
            <Separator />
            <Tool label="Property pages"><PageIcon /></Tool>
          </PanelBar>
          <PropertyArea>
            <PropertyTable>
              <colgroup><col /><col /><col /></colgroup>
              <tbody>
                <GroupRow><td><ExpandIcon /></td><th colSpan={2}>Data</th></GroupRow>
                <tr><GutterCell /><th>Description</th><td>Fraflytning</td></tr>
                <MutedRow><GutterCell /><th>ForeignKeyName</th><td /></MutedRow>
              </tbody>
            </PropertyTable>
          </PropertyArea>
        </SidePanels>
      </Workspace>
      <RelationshipDialog />
    </Window>
  );
}
